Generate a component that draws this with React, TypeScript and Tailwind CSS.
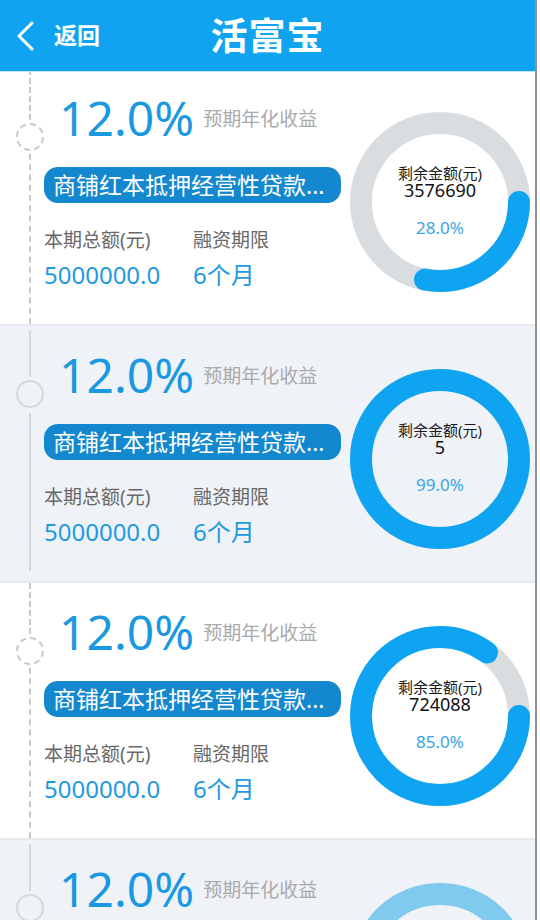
import type { ReactNode } from 'react';

type Product = {
  id: number;
  rate: string;
  title: string;
  total: string;
  term: string;
  remain: string;
  percent: number;
  ringColor?: string;
};

const products: Product[] = [
  { id: 1, rate: '12.0%', title: '商铺红本抵押经营性贷款...', total: '5000000.0', term: '6个月', remain: '3576690', percent: 28 },
  { id: 2, rate: '12.0%', title: '商铺红本抵押经营性贷款...', total: '5000000.0', term: '6个月', remain: '5', percent: 99 },
  { id: 3, rate: '12.0%', title: '商铺红本抵押经营性贷款...', total: '5000000.0', term: '6个月', remain: '724088', percent: 85 },
  { id: 4, rate: '12.0%', title: '商铺红本抵押经营性贷款...', total: '5000000.0', term: '6个月', remain: '0', percent: 100, ringColor: '#7fcaee' },
];

const FONT = "font-['Noto_Sans','Noto_Sans_CJK_SC',sans-serif]";

const BackArrow = () => (
  <svg width="22" height="32" viewBox="0 0 22 32" fill="none">
    <path d="M17 3 L4 16 L17 29" stroke="white" strokeWidth="3" strokeLinecap="round" strokeLinejoin="round" />
  </svg>
);

const Header = () => (
  <header className="relative z-10 grid h-[72px] grid-cols-[1fr_auto_1fr] items-center border-b border-[#bfe5fa] bg-[#0fa3f0] text-white">
    <button className="flex items-center gap-[17px] pl-[15px]">
      <BackArrow />
      <span className="text-[23px] font-bold leading-none">返回</span>
    </button>
    <h1 className="text-[37px] font-bold leading-none tracking-[1px]">活富宝</h1>
    <div />
  </header>
);

// vertical progress line on the left of each card
const Timeline = ({ dashed }: { dashed: boolean }) => {
  const seg = dashed ? 'border-l-2 border-dashed border-[#c9c9c9]' : 'border-l-2 border-[#d6d9dc]';
  return (
    <div className="w-[44px] shrink-0 pl-[16px]">
      <div className="flex h-full w-[28px] flex-col items-center">
        <div className={`${seg} ${dashed ? 'h-[51px]' : 'mt-[4px] h-[47px]'}`} />
        <div
          className={`my-[3px] h-[28px] w-[28px] rounded-full border-2 ${
            dashed ? 'border-dashed border-[#c9c9c9]' : 'border-[#d6d9dc]'
          }`}
        />
        <div className={`${seg} flex-1 ${dashed ? '' : 'mt-[2px] mb-[10px]'}`} />
      </div>
    </div>
  );
};

const Ring = ({ percent, color, children }: { percent: number; color: string; children: ReactNode }) => {
  const r = 79;
  const len = 2 * Math.PI * r;
  return (
    <div className="relative mt-[43px] mr-[5px] h-[180px] w-[180px] shrink-0">
      <svg width="180" height="180" viewBox="0 0 180 180">
        <circle cx="90" cy="90" r={r} fill="none" stroke="#d9dde0" strokeWidth="22" />
        <circle
          cx="90"
          cy="90"
          r={r}
          fill="none"
          stroke={color}
          strokeWidth="22"
          strokeLinecap="round"
          strokeDasharray={`${(len * percent) / 100} ${len}`}
        />
      </svg>
      <div className="absolute inset-0 flex flex-col items-center pt-[52px]">{children}</div>
    </div>
  );
};

const ProductCard = ({ item, alt }: { item: Product; alt: boolean }) => (
  <div className={`flex h-[257px] border-b-2 border-[#e6eaee] ${alt ? 'bg-[#eff3f7]' : 'bg-white'}`}>
    <Timeline dashed={!alt} />

    <div className="min-w-0 flex-1 pt-[25px]">
      <div className="ml-[15px] flex h-[48px] items-center gap-[9px]">
        <span className="text-[48px] leading-none text-[#1a99e2]">{item.rate}</span>
        <span className="mt-[2px] text-[19px] text-[#aaaaaa]">预期年化收益</span>
      </div>

      <div className="mt-[25px] flex h-[36px] w-[297px] items-center rounded-[14px] bg-[#1488cf] pl-[9px] text-[23px] leading-none text-white">
        {item.title}
      </div>

      <div className="mt-[25px] grid grid-cols-[149px_auto]">
        <span className="text-[19px] leading-[24px] text-[#686868]">本期总额(元)</span>
        <span className="text-[19px] leading-[24px] text-[#686868]">融资期限</span>
        <span className="mt-[8px] text-[24px] leading-[30px] text-[#1e9ae0]">{item.total}</span>
        <span className="mt-[8px] text-[24px] leading-[30px] text-[#1e9ae0]">{item.term}</span>
      </div>
    </div>

    <Ring percent={item.percent} color={item.ringColor ?? '#0ea4f2'}>
      <span className="text-[15px] leading-[18px] text-[#1c1c1c]">剩余金额(元)</span>
      <span className="-mt-[1px] text-[18px] leading-[18px] text-[#111]">{item.remain}</span>
      <span className="mt-[19px] text-[17px] leading-[20px] text-[#3aa4e4]">{item.percent.toFixed(1)}%</span>
    </Ring>
  </div>
);

export default function App() {
  return (
    <div className={`h-[920px] overflow-hidden bg-white pr-[3px] ${FONT}`}>
      <div className="h-full overflow-hidden border-r-2 border-[#8d9297]">
        <Header />
        <div className="-mt-[3px]">
          {products.map((p, i) => (
            <ProductCard key={p.id} item={p} alt={i % 2 === 1} />
          ))}
        </div>
      </div>
    </div>
  );
}
